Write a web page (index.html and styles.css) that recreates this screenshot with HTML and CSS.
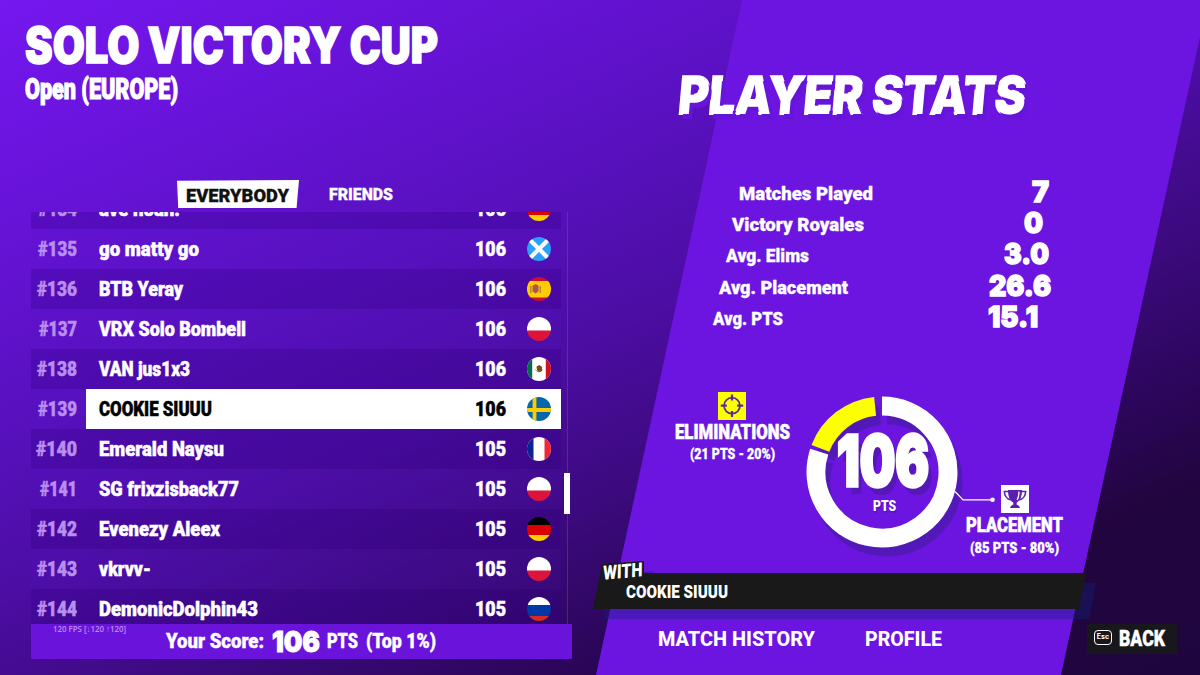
FILE: index.html
```
<!DOCTYPE html>
<html lang="en">
<head>
  <meta charset="utf-8">
  <meta name="viewport" content="width=device-width">
  <title>Solo Victory Cup</title>
  <link rel="stylesheet" href="styles.css">
</head>
<body>
  <svg class="defs">
    <symbol id="es" viewBox="0 0 24 24"><path fill="#c8102e" d="M0 0h24v24H0z"/><path fill="#fc0" d="M0 4h24v16.500H0z"/><path fill="#b98a2c" d="M3 9h1.500v7H3zM12.500 9H14v7h-1.500z"/><path fill="#b5583c" d="M5.500 8.500l3-1.500 3 1.500v6l-3 2-3-2z"/><path fill="#8c5a8c" d="M8.500 10h2.500v3.500H8.500z"/></symbol>
    <symbol id="sct" viewBox="0 0 24 24"><path fill="#2ba0f8" d="M0 0h24v24H0z"/><path stroke="#fff" stroke-width="4.200" d="M2 2l20 20M22 2L2 22"/></symbol>
    <symbol id="pl" viewBox="0 0 24 24"><path fill="#fff" d="M0 0h24v14H0z"/><path fill="#dc143c" d="M0 13.500h24V24H0z"/></symbol>
    <symbol id="mx" viewBox="0 0 24 24"><path fill="#fff" d="M0 0h24v24H0z"/><path fill="#066b49" d="M0 0h5.200v24H0z"/><path fill="#ce1126" d="M18.800 0H24v24h-5.200z"/><path fill="none" stroke="#7fa03c" d="M8.500 12.500a3.800 3.800 0 0 0 7 0"/><path fill="#7d4a1e" d="M9.500 9.500l3-1.500 2.500 2v4l-3 1-2-2z"/></symbol>
    <symbol id="se" viewBox="0 0 24 24"><path fill="#0668aa" d="M0 0h24v24H0z"/><path stroke="#fecb00" stroke-width="3.800" d="M0 13h24M7.500 0v24"/></symbol>
    <symbol id="fr" viewBox="0 0 24 24"><path fill="#fff" d="M0 0h24v24H0z"/><path fill="#0a2490" d="M0 0h6.500v24H0z"/><path fill="#ee2839" d="M17.500 0H24v24h-6.500z"/></symbol>
    <symbol id="de" viewBox="0 0 24 24"><path d="M0 0h24v8H0z"/><path fill="#d00" d="M0 8h24v10H0z"/><path fill="#ffce00" d="M0 18h24v6H0z"/></symbol>
    <symbol id="ru" viewBox="0 0 24 24"><path fill="#fff" d="M0 0h24v8H0z"/><path fill="#0039a6" d="M0 8h24v11H0z"/><path fill="#d52b1e" d="M0 19h24v5H0z"/></symbol>
  </svg>

  <section class="board">
    <h1><span class="fit" data-width="413">SOLO VICTORY CUP</span></h1>
    <h3><span class="fit" data-width="153">Open (EUROPE)</span></h3>
    <nav class="tabs">
      <div class="tab active"><span class="fit" data-width="103">EVERYBODY</span></div>
      <div class="tab"><span class="fit" data-width="64">FRIENDS</span></div>
    </nav>
    <div class="list">
      <div class="rows">
        <div class="row"><div class="rank"><span class="fit" data-width="39">#134</span></div><div class="entry"><span class="fit" data-width="81">ave noah.</span><b><span class="fit" data-width="31">106</span></b><svg class="flag"><use href="#de"/></svg></div></div>
        <div class="row"><div class="rank"><span class="fit" data-width="39">#135</span></div><div class="entry"><span class="fit" data-width="100">go matty go</span><b><span class="fit" data-width="31">106</span></b><svg class="flag"><use href="#sct"/></svg></div></div>
        <div class="row"><div class="rank"><span class="fit" data-width="40">#136</span></div><div class="entry"><span class="fit" data-width="84">BTB Yeray</span><b><span class="fit" data-width="31">106</span></b><svg class="flag"><use href="#es"/></svg></div></div>
        <div class="row"><div class="rank"><span class="fit" data-width="38">#137</span></div><div class="entry"><span class="fit" data-width="147">VRX Solo Bombell</span><b><span class="fit" data-width="31">106</span></b><svg class="flag"><use href="#pl"/></svg></div></div>
        <div class="row"><div class="rank"><span class="fit" data-width="40">#138</span></div><div class="entry"><span class="fit" data-width="91">VAN jus1x3</span><b><span class="fit" data-width="31">106</span></b><svg class="flag"><use href="#mx"/></svg></div></div>
        <div class="row me"><div class="rank"><span class="fit" data-width="39">#139</span></div><div class="entry"><span class="fit" data-width="113">COOKIE SIUUU</span><b><span class="fit" data-width="31">106</span></b><svg class="flag"><use href="#se"/></svg></div></div>
        <div class="row"><div class="rank"><span class="fit" data-width="41">#140</span></div><div class="entry"><span class="fit" data-width="125">Emerald Naysu</span><b><span class="fit" data-width="31">105</span></b><svg class="flag"><use href="#fr"/></svg></div></div>
        <div class="row"><div class="rank"><span class="fit" data-width="37">#141</span></div><div class="entry"><span class="fit" data-width="140">SG frixzisback77</span><b><span class="fit" data-width="31">105</span></b><svg class="flag"><use href="#pl"/></svg></div></div>
        <div class="row"><div class="rank"><span class="fit" data-width="40">#142</span></div><div class="entry"><span class="fit" data-width="121">Evenezy Aleex</span><b><span class="fit" data-width="31">105</span></b><svg class="flag"><use href="#de"/></svg></div></div>
        <div class="row"><div class="rank"><span class="fit" data-width="40">#143</span></div><div class="entry"><span class="fit" data-width="52">vkrvv-</span><b><span class="fit" data-width="31">105</span></b><svg class="flag"><use href="#pl"/></svg></div></div>
        <div class="row"><div class="rank"><span class="fit" data-width="40">#144</span></div><div class="entry"><span class="fit" data-width="159">DemonicDolphin43</span><b><span class="fit" data-width="31">105</span></b><svg class="flag"><use href="#ru"/></svg></div></div>
      </div>
      <div class="scrollbar"><div class="thumb"></div></div>
    </div>
    <div class="score">
      <span class="fps"><span class="fit" data-width="73">120 FPS [↓120 ↑120]</span></span>
      <span class="fit" data-width="98">Your Score:</span>
      <span class="big"><span class="fit" data-width="48">106</span></span>
      <span class="fit" data-width="31">PTS</span>
      <span class="fit top" data-width="70">(Top 1%)</span>
    </div>
  </section>

  <section class="panel">
    <h2><span class="fit" data-width="347">PLAYER STATS</span></h2>
    <ul class="stats">
      <li><span class="fit" data-width="134">Matches Played</span><b><span class="fit" data-width="17">7</span></b></li>
      <li><span class="fit" data-width="132">Victory Royales</span><b><span class="fit" data-width="19">0</span></b></li>
      <li><span class="fit" data-width="83">Avg. Elims</span><b><span class="fit" data-width="45">3.0</span></b></li>
      <li><span class="fit" data-width="129">Avg. Placement</span><b><span class="fit" data-width="62">26.6</span></b></li>
      <li><span class="fit" data-width="70">Avg. PTS</span><b><span class="fit" data-width="50">15.1</span></b></li>
    </ul>
    <div class="breakdown">
      <div class="source">
        <svg class="icon" viewBox="0 0 28 28">
          <path fill="#fbff00" d="M0 0h28v28H0z"/>
          <g fill="none" stroke="#5a2a9c" stroke-width="1.700"><circle cx="14" cy="13.700" r="8"/><path stroke-width="2.200" d="M14 2.500v6M14 19v6M2.800 13.700h6M19.200 13.700h6"/></g>
        </svg>
        <strong><span class="fit" data-width="115">ELIMINATIONS</span></strong>
        <small><span class="fit" data-width="85">(21 PTS - 20%)</span></small>
      </div>
      <div class="donut">
        <svg viewBox="-80 -80 160 160">
          <g fill="none" stroke-width="19">
            <g class="shade" transform="translate(5 9)"><path d="M0-66A66 66 0 1 1-62.770-20.390"/><path d="M-61.600-23.650A66 66 0 0 1-6.900-65.640"/></g>
            <path stroke="#fff" d="M0-66A66 66 0 1 1-62.770-20.390"/>
            <path stroke="#fbff00" d="M-61.600-23.650A66 66 0 0 1-6.900-65.640"/>
          </g>
          <path fill="none" stroke="#fff" stroke-width="1.200" d="M73 19.500l8 8.300h29"/>
          <circle cx="110.500" cy="27.800" r="2.300" fill="#fff"/>
        </svg>
        <div class="total">
          <b><span class="fit" data-width="92">106</span></b>
          <small><span class="fit" data-width="23">PTS</span></small>
        </div>
      </div>
      <div class="source placement">
        <svg class="icon" viewBox="0 0 28 28">
          <path fill="#fff" d="M0 0h28v28H0z"/>
          <path fill="#5b1fb0" d="M7 5h14c0 6-1.500 10.500-5.300 12.500v2.300c1.500.3 2.800 1.200 3.300 3.200H9c.5-2 1.800-2.900 3.300-3.200v-2.300C8.500 15.500 7 11 7 5z"/>
          <path fill="none" stroke="#5b1fb0" stroke-width="1.500" d="M7.500 6.500H3.300c.2 4 2.200 7.300 6.500 8.500M20.500 6.500h4.200c-.2 4-2.200 7.300-6.500 8.500"/>
          <path fill="none" stroke="#fff" stroke-width="1.200" d="M18 6.500c0 4-.6 6.500-2 8.500"/>
        </svg>
        <strong><span class="fit" data-width="97">PLACEMENT</span></strong>
        <small><span class="fit" data-width="89">(85 PTS - 80%)</span></small>
      </div>
    </div>
    <div class="with">
      <div class="with-label"><span class="fit" data-width="40">WITH</span></div>
      <div class="bar"><span class="fit" data-width="102">COOKIE SIUUU</span></div>
    </div>
    <footer>
      <span class="fit" data-width="157">MATCH HISTORY</span>
      <span class="fit profile" data-width="77">PROFILE</span>
      <div class="back"><kbd>Esc</kbd><span class="fit" data-width="46">BACK</span></div>
    </footer>
  </section>
  <script src="fit.js"></script>
</body>
</html>
```
FILE: styles.css
```
* {
  box-sizing: border-box;
}
body {
  margin: 0;
  width: 1200px;
  height: 675px;
  overflow: hidden;
  display: flex;
  color: #fff;
  font-family: Roboto, "Liberation Sans", sans-serif;
  font-weight: 900;
  background: linear-gradient(156deg, #7517f0 0%, #6713d8 18%, #5911c0 34%, #4b0da2 50%, #3c0a7e 63%, #2c065c 75%, #22053f 84%, #1f053e 100%);
}
h1, h2, h3, ul {
  margin: 0;
  padding: 0;
}
.defs {
  position: absolute;
  width: 0;
  height: 0;
}
.fit {
  display: inline-block;
  white-space: nowrap;
  transform-origin: 0 50%;
}
.board {
  width: 593px;
  height: 675px;
  display: flex;
  flex-direction: column;
}
h1 {
  margin: 15px 0 0 25px;
  height: 62px;
  font: 900 49px/61px Inter, sans-serif;
  -webkit-text-stroke: 1.5px #fff;
}
h3 {
  margin-left: 25px;
  height: 24px;
  font-size: 29.5px;
  font-weight: 900;
  line-height: 25px;
  -webkit-text-stroke: 1.2px #fff;
}
.tabs {
  display: flex;
  align-items: center;
  margin: 79px 0 4px 177px;
  height: 28px;
}
.tab {
  height: 28px;
  line-height: 30px;
  font-size: 16.5px;
  margin-left: 30px;
  -webkit-text-stroke: 0.3px;
}
.tab.active {
  width: 122px;
  margin: 0;
  padding: 1px 0 0 9px;
  font-size: 18.5px;
  color: #111;
  background: #fff;
  clip-path: polygon(0 3%, 100% 0, 98% 100%, 1% 100%);
}
.list {
  display: flex;
  margin-left: 31px;
  height: 412px;
  overflow: hidden;
}
.rows {
  width: 530px;
  margin-top: -23px;
}
.row {
  display: flex;
  height: 40px;
  line-height: 40px;
  font-size: 20px;
  background: rgba(86, 20, 200, 0.15);
  -webkit-text-stroke: 0.5px;
}
.row:nth-child(odd) {
  background: rgba(52, 0, 140, 0.3);
}
.rank {
  width: 55px;
  padding-right: 9px;
  text-align: right;
  color: #b98eee;
}
.entry {
  flex: 1;
  display: flex;
  align-items: center;
  padding: 0 10px 0 12.5px;
}
.entry b {
  margin-left: auto;
  margin-right: 21px;
  font-weight: 900;
}
.me .entry {
  background: #fff;
  color: #000;
}
.flag {
  width: 24px;
  height: 24px;
  border-radius: 50%;
}
.scrollbar {
  width: 6px;
  margin-left: 3px;
  background: linear-gradient(90deg, transparent 3px, rgba(150, 90, 230, 0.3) 3px, rgba(150, 90, 230, 0.3) 4px, transparent 4px);
}
.thumb {
  margin-top: 261px;
  height: 41px;
  background: #fff;
}
.score {
  position: relative;
  display: flex;
  align-items: center;
  margin-left: 31px;
  padding-left: 134.500px;
  width: 541px;
  height: 35px;
  font-size: 20px;
  line-height: 35px;
  background: #6a14db;
  -webkit-text-stroke: 0.4px;
}
.score .big {
  margin: 0 7px 0 8px;
  font: 900 29px/35px Inter, sans-serif;
  -webkit-text-stroke: 1px;
}
.score .top {
  margin-left: 8.500px;
}
.fps {
  position: absolute;
  left: 21.500px;
  top: -1.500px;
  font: 600 9px/11px "Open Sans", sans-serif;
  color: #b98ef0;
  -webkit-text-stroke: 0;
}
.panel {
  position: relative;
  width: 607px;
  height: 675px;
}
.panel::before {
  content: "";
  position: absolute;
  inset: 0;
  z-index: -1;
  background: #6c15e0;
  clip-path: polygon(149px 0, 607px 0, 607px 37px, 468px 675px, 3px 675px);
}
h2 {
  margin: 63px 0 0 86px;
  height: 65px;
  width: 350px;
  font: 900 52px/65px Inter, sans-serif;
  transform: skewX(-5deg);
  text-shadow: 4px 5px 0 #6614da;
  -webkit-text-stroke: 2px #fff;
  paint-order: stroke;
}
.stats {
  list-style: none;
  margin-top: 50px;
  height: 202px;
}
.stats li {
  display: flex;
  justify-content: space-between;
  height: 31.200px;
  line-height: 31px;
  font-size: 19px;
  -webkit-text-stroke: 0.3px;
}
.stats b {
  margin-top: -2px;
  font: 900 29px/31px Inter, sans-serif;
  -webkit-text-stroke: 1.4px;
}
.stats li:nth-child(1) { padding: 0 151px 0 146px; }
.stats li:nth-child(2) { padding: 0 157px 0 139px; }
.stats li:nth-child(3) { padding: 0 151px 0 133px; }
.stats li:nth-child(4) { padding: 0 149px 0 126px; }
.stats li:nth-child(5) { padding: 0 162px 0 120px; }
.breakdown {
  display: flex;
  margin-left: 79px;
  height: 193px;
}
.source {
  display: flex;
  flex-direction: column;
  align-items: center;
  width: 120px;
  margin-top: 12px;
}
.source.placement {
  width: 110px;
  margin: 105px 0 0 -2.500px;
}
.icon {
  width: 28px;
  height: 28px;
}
.source strong {
  height: 24px;
  line-height: 25px;
  font-size: 21px;
  font-weight: 900;
  -webkit-text-stroke: 0.6px;
}
.source small {
  height: 20px;
  line-height: 22px;
  font-size: 14.500px;
  -webkit-text-stroke: 0.3px;
}
.source.placement small {
  line-height: 24px;
}
.donut {
  position: relative;
  width: 160px;
  height: 160px;
  margin: 11.500px 0 0 10px;
}
.donut svg {
  width: 160px;
  height: 160px;
  overflow: visible;
}
.shade {
  stroke: #5319b8;
}
.total {
  position: absolute;
  left: 35px;
  top: 33px;
  width: 94px;
}
.total b {
  display: block;
  height: 72px;
  font: 900 70px/72px Inter, sans-serif;
  text-shadow: 6px 8px 0 #5517b8;
  -webkit-text-stroke: 3.5px #fff;
}
.total small {
  display: block;
  margin: 0 0 0 36px;
  font-size: 15px;
  line-height: 18px;
  text-shadow: 1px 2px 0 #5517b8;
}
.with {
  position: relative;
  height: 36px;
}
.bar {
  position: relative;
  width: 493px;
  height: 36px;
  padding-left: 33px;
  line-height: 38px;
  font-size: 18px;
}
.bar::before, .with::before {
  content: "";
  position: absolute;
  left: 0;
  top: -12px;
  width: 493px;
  height: 48px;
  z-index: -1;
  background: #191919;
  clip-path: polygon(9px 3px, 51px 0, 51px 12px, 493px 12px, 486px 48px, 0 48px);
}
.with::before {
  left: 10px;
  top: -2px;
  background: rgba(15, 35, 120, 0.38);
}
.with-label {
  position: absolute;
  left: 9.500px;
  top: -11px;
  z-index: 1;
  height: 20px;
  font-size: 19.500px;
  line-height: 20px;
  transform: rotate(-5deg) skewX(-6deg);
  text-shadow: 1px 1px #191919, -1px -1px #191919, -1px 1px #191919, 2px -1px #191919;
}
footer {
  display: flex;
  align-items: center;
  height: 30px;
  margin: 15px 0 0 65px;
  font-size: 20.500px;
  line-height: 32px;
  font-weight: 800;
}
.profile {
  margin-left: 50px;
}
.back {
  display: flex;
  align-items: center;
  width: 90px;
  height: 30px;
  margin-left: 145px;
  padding-left: 7px;
  font-size: 21.500px;
  line-height: 30px;
  font-weight: 900;
  background: #18171b;
  -webkit-text-stroke: 0.4px;
}
.back kbd {
  width: 18px;
  height: 15px;
  margin: -3px 7px 0 0;
  border: 1.500px solid #fff;
  border-radius: 4px;
  text-align: center;
  font: 700 7px/12px Inter, sans-serif;
  -webkit-text-stroke: 0;
}
```
FILE: fit.js
```
document.querySelectorAll('.fit').forEach(function (el) {
  var width = parseFloat(el.dataset.width);
  var natural = el.getBoundingClientRect().width;
  if (el.closest('.with-label') || el.closest('h2')) {
    natural = el.offsetWidth;
  }
  el.style.width = width + 'px';
  el.style.transform = 'scaleX(' + width / natural + ')';
});
```
